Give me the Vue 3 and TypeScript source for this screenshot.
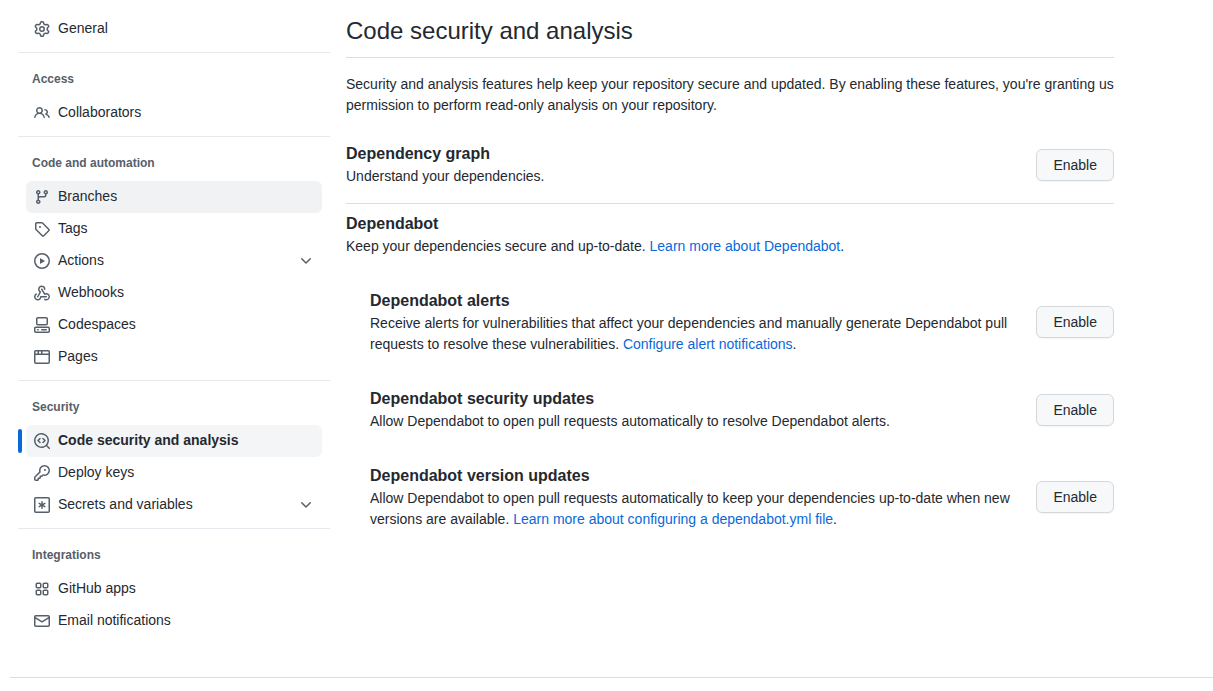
<script setup lang="ts">
interface NavItem {
  label: string
  icon: string
  expandable?: boolean
  hovered?: boolean
  current?: boolean
}
interface NavGroup {
  title?: string
  items: NavItem[]
}
interface Feature {
  title: string
  text: string
  link?: string
}

const icons: Record<string, string> = {
  gear: 'M8 0a8.2 8.2 0 0 1 .701.031C9.444.095 9.99.645 10.16 1.29l.288 1.107c.018.066.079.158.212.224.231.114.454.243.668.386.123.082.233.09.299.071l1.103-.303c.644-.176 1.392.021 1.82.63.27.385.506.792.704 1.218.315.675.111 1.422-.364 1.891l-.814.806c-.049.048-.098.147-.088.294.016.257.016.515 0 .772-.01.147.038.246.088.294l.814.806c.475.469.679 1.216.364 1.891a7.977 7.977 0 0 1-.704 1.217c-.428.61-1.176.807-1.82.63l-1.102-.302c-.067-.019-.177-.011-.3.071a5.909 5.909 0 0 1-.668.386c-.133.066-.194.158-.211.224l-.29 1.106c-.168.646-.715 1.196-1.458 1.26a8.006 8.006 0 0 1-1.402 0c-.743-.064-1.289-.614-1.458-1.26l-.289-1.106c-.018-.066-.079-.158-.212-.224a5.738 5.738 0 0 1-.668-.386c-.123-.082-.233-.09-.299-.071l-1.103.303c-.644.176-1.392-.021-1.82-.63a8.12 8.12 0 0 1-.704-1.218c-.315-.675-.111-1.422.363-1.891l.815-.806c.05-.048.098-.147.088-.294a6.214 6.214 0 0 1 0-.772c.01-.147-.038-.246-.088-.294l-.815-.806C.635 6.045.431 5.298.746 4.623a7.92 7.92 0 0 1 .704-1.217c.428-.61 1.176-.807 1.82-.63l1.102.302c.067.019.177.011.3-.071.214-.143.437-.272.668-.386.133-.066.194-.158.211-.224l.29-1.106C6.009.645 6.556.095 7.299.03 7.53.01 7.764 0 8 0Zm-.571 1.525c-.036.003-.108.036-.137.146l-.289 1.105c-.147.561-.549.967-.998 1.189-.173.086-.34.183-.5.29-.417.278-.97.423-1.529.27l-1.103-.303c-.109-.03-.175.016-.195.045-.22.312-.412.644-.573.99-.014.031-.021.11.059.19l.815.806c.411.406.562.957.53 1.456a4.709 4.709 0 0 0 0 .582c.032.499-.119 1.05-.53 1.456l-.815.806c-.081.08-.073.159-.059.19.162.346.353.677.573.989.02.03.085.076.195.046l1.102-.303c.56-.153 1.113-.008 1.53.27.161.107.328.204.501.29.447.222.85.629.997 1.189l.289 1.105c.029.109.101.143.137.146a6.6 6.6 0 0 0 1.142 0c.036-.003.108-.036.137-.146l.289-1.105c.147-.561.549-.967.998-1.189.173-.086.34-.183.5-.29.417-.278.97-.423 1.529-.27l1.103.303c.109.029.175-.016.195-.045.22-.313.411-.644.573-.99.014-.031.021-.11-.059-.19l-.815-.806c-.411-.406-.562-.957-.53-1.456a4.709 4.709 0 0 0 0-.582c-.032-.499.119-1.05.53-1.456l.815-.806c.081-.08.073-.159.059-.19a6.464 6.464 0 0 0-.573-.989c-.02-.03-.085-.076-.195-.046l-1.102.303c-.56.153-1.113.008-1.53-.27a4.44 4.44 0 0 0-.501-.29c-.447-.222-.85-.629-.997-1.189l-.289-1.105c-.029-.11-.101-.143-.137-.146a6.6 6.6 0 0 0-1.142 0ZM11 8a3 3 0 1 1-6 0 3 3 0 0 1 6 0ZM9.5 8a1.5 1.5 0 1 0-3.001.001A1.5 1.5 0 0 0 9.5 8Z',
  people: 'M2 5.5a3.5 3.5 0 1 1 5.898 2.549 5.508 5.508 0 0 1 3.034 4.084.75.75 0 1 1-1.482.235 4 4 0 0 0-7.9 0 .75.75 0 0 1-1.482-.236A5.507 5.507 0 0 1 3.102 8.05 3.493 3.493 0 0 1 2 5.5ZM11 4a3.001 3.001 0 0 1 2.22 5.018 5.01 5.01 0 0 1 2.56 3.012.749.749 0 0 1-.885.954.752.752 0 0 1-.549-.514 3.507 3.507 0 0 0-2.522-2.372.75.75 0 0 1-.574-.73v-.352a.75.75 0 0 1 .416-.672A1.5 1.5 0 0 0 11 5.5.75.75 0 0 1 11 4Zm-5.5-.5a2 2 0 1 0-.001 3.999A2 2 0 0 0 5.5 3.5Z',
  branch: 'M9.5 3.25a2.25 2.25 0 1 1 3 2.122V6A2.5 2.5 0 0 1 10 8.5H6a1 1 0 0 0-1 1v1.128a2.251 2.251 0 1 1-1.5 0V5.372a2.25 2.25 0 1 1 1.5 0v1.836A2.493 2.493 0 0 1 6 7h4a1 1 0 0 0 1-1v-.628A2.25 2.25 0 0 1 9.5 3.25Zm-6 0a.75.75 0 1 0 1.5 0 .75.75 0 0 0-1.5 0Zm8.25-.75a.75.75 0 1 0 0 1.5.75.75 0 0 0 0-1.5ZM4.25 12a.75.75 0 1 0 0 1.5.75.75 0 0 0 0-1.5Z',
  tag: 'M1 7.775V2.75C1 1.784 1.784 1 2.75 1h5.025c.464 0 .91.184 1.238.513l6.25 6.25a1.75 1.75 0 0 1 0 2.474l-5.026 5.026a1.75 1.75 0 0 1-2.474 0l-6.25-6.25A1.752 1.752 0 0 1 1 7.775Zm1.5 0c0 .066.026.13.073.177l6.25 6.25a.25.25 0 0 0 .354 0l5.025-5.025a.25.25 0 0 0 0-.354l-6.25-6.25a.25.25 0 0 0-.177-.073H2.75a.25.25 0 0 0-.25.25ZM6 5a1 1 0 1 1 0 2 1 1 0 0 1 0-2Z',
  play: 'M8 0a8 8 0 1 1 0 16A8 8 0 0 1 8 0ZM1.5 8a6.5 6.5 0 1 0 13 0 6.5 6.5 0 0 0-13 0Zm4.879-2.773 4.264 2.559a.25.25 0 0 1 0 .428l-4.264 2.559A.25.25 0 0 1 6 10.559V5.442a.25.25 0 0 1 .379-.215Z',
  webhook: 'M5.5 4.25a2.25 2.25 0 0 1 4.5 0 .75.75 0 0 0 1.5 0 3.75 3.75 0 1 0-6.14 2.889l-2.272 4.258a.75.75 0 0 0 1.324.706L7 7.25a.75.75 0 0 0-.309-1.015A2.25 2.25 0 0 1 5.5 4.25Z M7.364 3.607a.75.75 0 0 1 1.03.257l2.608 4.349a3.75 3.75 0 1 1-.628 6.785.75.75 0 0 1 .752-1.299 2.25 2.25 0 1 0-.033-3.88.75.75 0 0 1-1.03-.256L7.107 4.636a.75.75 0 0 1 .257-1.03Z M2.9 8.776A.75.75 0 0 1 2.625 9.8 2.25 2.25 0 1 0 6 11.75a.75.75 0 0 1 .75-.751h5.5a.75.75 0 0 1 0 1.5H7.425a3.751 3.751 0 1 1-5.55-3.998.75.75 0 0 1 1.024.274Z',
  codespaces: 'M0 11.25c0-.966.784-1.75 1.75-1.75h12.5c.966 0 1.75.784 1.75 1.75v3A1.75 1.75 0 0 1 14.25 16H1.75A1.75 1.75 0 0 1 0 14.25Zm2-9.5C2 .784 2.784 0 3.75 0h8.5C13.216 0 14 .784 14 1.75v5a1.75 1.75 0 0 1-1.75 1.75h-8.5A1.75 1.75 0 0 1 2 6.75Zm1.75-.25a.25.25 0 0 0-.25.25v5c0 .138.112.25.25.25h8.5a.25.25 0 0 0 .25-.25v-5a.25.25 0 0 0-.25-.25Zm-2 9.5a.25.25 0 0 0-.25.25v3c0 .138.112.25.25.25h12.5a.25.25 0 0 0 .25-.25v-3a.25.25 0 0 0-.25-.25Z M7 12.75a.75.75 0 0 1 .75-.75h4.5a.75.75 0 0 1 0 1.5h-4.5a.75.75 0 0 1-.75-.75Zm-4 0a.75.75 0 0 1 .75-.75h.5a.75.75 0 0 1 0 1.5h-.5a.75.75 0 0 1-.75-.75Z',
  browser: 'M0 2.75C0 1.784.784 1 1.75 1h12.5c.966 0 1.75.784 1.75 1.75v10.5A1.75 1.75 0 0 1 14.25 15H1.75A1.75 1.75 0 0 1 0 13.25ZM14.5 6h-13v7.25c0 .138.112.25.25.25h12.5a.25.25 0 0 0 .25-.25Zm-6-3.5v2h6V2.75a.25.25 0 0 0-.25-.25ZM5 2.5v2h2v-2Zm-3.25 0a.25.25 0 0 0-.25.25V4.5h2v-2Z',
  codescan: 'M8.47 4.97a.75.75 0 0 0 0 1.06L9.94 7.5 8.47 8.97a.75.75 0 1 0 1.06 1.06l2-2a.75.75 0 0 0 0-1.06l-2-2a.75.75 0 0 0-1.06 0ZM6.53 6.03a.75.75 0 0 0-1.06-1.06l-2 2a.75.75 0 0 0 0 1.06l2 2a.75.75 0 1 0 1.06-1.06L5.06 7.5l1.47-1.47Z M12.246 13.307a7.501 7.501 0 1 1 1.06-1.06l2.474 2.473a.749.749 0 1 1-1.06 1.06ZM1.5 7.5a6.002 6.002 0 0 0 3.608 5.504 6.002 6.002 0 0 0 6.486-1.117.748.748 0 0 1 .292-.293A6 6 0 1 0 1.5 7.5Z',
  key: 'M10.5 0a5.499 5.499 0 1 1-1.288 10.848l-.932.932a.749.749 0 0 1-.53.22H7v.75a.749.749 0 0 1-.22.53l-.5.5a.749.749 0 0 1-.53.22H5v.75a.749.749 0 0 1-.22.53l-.5.5a.749.749 0 0 1-.53.22h-2A1.75 1.75 0 0 1 0 14.25v-2c0-.199.079-.389.22-.53l4.932-4.932A5.5 5.5 0 0 1 10.5 0Zm-4 5.5c-.001.431.069.86.205 1.269a.75.75 0 0 1-.181.768L1.5 12.56v1.69c0 .138.112.25.25.25h1.69l.06-.06v-1.19a.75.75 0 0 1 .75-.75h1.19l.06-.06v-1.19a.75.75 0 0 1 .75-.75h1.19l1.023-1.025a.75.75 0 0 1 .768-.18A4 4 0 1 0 6.5 5.5ZM11 6a1 1 0 1 1 0-2 1 1 0 0 1 0 2Z',
  secret: 'M1.75 0h12.5C15.216 0 16 .784 16 1.75v12.5A1.75 1.75 0 0 1 14.25 16H1.75A1.75 1.75 0 0 1 0 14.25V1.75C0 .784.784 0 1.75 0Zm0 1.5a.25.25 0 0 0-.25.25v12.5c0 .138.112.25.25.25h12.5a.25.25 0 0 0 .25-.25V1.75a.25.25 0 0 0-.25-.25Z M8 4a.75.75 0 0 1 .75.75V6.7l1.69-.975a.75.75 0 0 1 .75 1.3L9.5 8l1.69.975a.75.75 0 0 1-.75 1.3L8.75 9.3v1.95a.75.75 0 0 1-1.5 0V9.3l-1.69.975a.75.75 0 0 1-.75-1.3L6.5 8l-1.69-.975a.75.75 0 0 1 .75-1.3L7.25 6.7V4.75A.75.75 0 0 1 8 4Z',
  apps: 'M3.25 1.5h2.5c.966 0 1.75.784 1.75 1.75v2.5A1.75 1.75 0 0 1 5.75 7.5h-2.5A1.75 1.75 0 0 1 1.5 5.75v-2.5c0-.966.784-1.75 1.75-1.75Zm0 1.5a.25.25 0 0 0-.25.25v2.5c0 .138.112.25.25.25h2.5A.25.25 0 0 0 6 5.75v-2.5A.25.25 0 0 0 5.75 3Zm7-1.5h2.5c.966 0 1.75.784 1.75 1.75v2.5a1.75 1.75 0 0 1-1.75 1.75h-2.5A1.75 1.75 0 0 1 8.5 5.75v-2.5c0-.966.784-1.75 1.75-1.75Zm0 1.5a.25.25 0 0 0-.25.25v2.5c0 .138.112.25.25.25h2.5a.25.25 0 0 0 .25-.25v-2.5a.25.25 0 0 0-.25-.25Zm-7 5.5h2.5c.966 0 1.75.784 1.75 1.75v2.5a1.75 1.75 0 0 1-1.75 1.75h-2.5a1.75 1.75 0 0 1-1.75-1.75v-2.5c0-.966.784-1.75 1.75-1.75Zm0 1.5a.25.25 0 0 0-.25.25v2.5c0 .138.112.25.25.25h2.5a.25.25 0 0 0 .25-.25v-2.5a.25.25 0 0 0-.25-.25Zm7-1.5h2.5c.966 0 1.75.784 1.75 1.75v2.5a1.75 1.75 0 0 1-1.75 1.75h-2.5a1.75 1.75 0 0 1-1.75-1.75v-2.5c0-.966.784-1.75 1.75-1.75Zm0 1.5a.25.25 0 0 0-.25.25v2.5c0 .138.112.25.25.25h2.5a.25.25 0 0 0 .25-.25v-2.5a.25.25 0 0 0-.25-.25Z',
  mail: 'M1.75 2h12.5c.966 0 1.75.784 1.75 1.75v8.5A1.75 1.75 0 0 1 14.25 14H1.75A1.75 1.75 0 0 1 0 12.25v-8.5C0 2.784.784 2 1.75 2ZM1.5 12.251c0 .138.112.25.25.25h12.5a.25.25 0 0 0 .25-.25V5.809L8.38 9.397a.75.75 0 0 1-.76 0L1.5 5.809v6.442Zm13-8.181v-.32a.25.25 0 0 0-.25-.25H1.75a.25.25 0 0 0-.25.25v.32L8 7.88Z',
  chevron: 'M12.78 5.22a.749.749 0 0 1 0 1.06l-4.25 4.25a.749.749 0 0 1-1.06 0L3.22 6.28a.749.749 0 1 1 1.06-1.06L8 8.939l3.72-3.719a.749.749 0 0 1 1.06 0Z',
}

const groups: NavGroup[] = [
  { items: [{ label: 'General', icon: 'gear' }] },
  { title: 'Access', items: [{ label: 'Collaborators', icon: 'people' }] },
  {
    title: 'Code and automation',
    items: [
      { label: 'Branches', icon: 'branch', hovered: true },
      { label: 'Tags', icon: 'tag' },
      { label: 'Actions', icon: 'play', expandable: true },
      { label: 'Webhooks', icon: 'webhook' },
      { label: 'Codespaces', icon: 'codespaces' },
      { label: 'Pages', icon: 'browser' },
    ],
  },
  {
    title: 'Security',
    items: [
      { label: 'Code security and analysis', icon: 'codescan', current: true },
      { label: 'Deploy keys', icon: 'key' },
      { label: 'Secrets and variables', icon: 'secret', expandable: true },
    ],
  },
  {
    title: 'Integrations',
    items: [
      { label: 'GitHub apps', icon: 'apps' },
      { label: 'Email notifications', icon: 'mail' },
    ],
  },
]

const features: Feature[] = [
  {
    title: 'Dependabot alerts',
    text: 'Receive alerts for vulnerabilities that affect your dependencies and manually generate Dependabot pull requests to resolve these vulnerabilities.',
    link: 'Configure alert notifications',
  },
  {
    title: 'Dependabot security updates',
    text: 'Allow Dependabot to open pull requests automatically to resolve Dependabot alerts.',
  },
  {
    title: 'Dependabot version updates',
    text: 'Allow Dependabot to open pull requests automatically to keep your dependencies up-to-date when new versions are available.',
    link: 'Learn more about configuring a dependabot.yml file',
  },
]
</script>

<template>
  <div class="page">
    <div class="layout">
      <nav class="sidebar" aria-label="Repository settings">
        <section v-for="(group, g) in groups" :key="g" class="group">
          <h2 v-if="group.title" class="group-title">{{ group.title }}</h2>
          <ul class="list">
            <li v-for="item in group.items" :key="item.label" class="entry" :class="{ current: item.current }">
              <component
                :is="item.expandable ? 'button' : 'a'"
                class="nav-item"
                :class="{ hovered: item.hovered }"
                :href="item.expandable ? undefined : '#'"
                :type="item.expandable ? 'button' : undefined"
                :aria-expanded="item.expandable ? 'false' : undefined"
                :aria-current="item.current ? 'page' : undefined"
              >
                <svg class="icon" viewBox="0 0 16 16" aria-hidden="true"><path :d="icons[item.icon]" /></svg>
                <span class="nav-label">{{ item.label }}</span>
                <svg v-if="item.expandable" class="icon" viewBox="0 0 16 16" aria-hidden="true">
                  <path :d="icons.chevron" />
                </svg>
              </component>
            </li>
          </ul>
        </section>
      </nav>

      <main class="content">
        <h1 class="title">Code security and analysis</h1>
        <p class="intro">
          Security and analysis features help keep your repository secure and updated. By enabling these features,
          you're granting us permission to perform read-only analysis on your repository.
        </p>

        <section class="feature graph">
          <div class="feature-text">
            <h3 id="graph-title">Dependency graph</h3>
            <p>Understand your dependencies.</p>
          </div>
          <button class="btn" type="button" aria-describedby="graph-title">Enable</button>
        </section>

        <section class="dependabot">
          <h3>Dependabot</h3>
          <p>Keep your dependencies secure and up-to-date. <a href="#">Learn more about Dependabot</a>.</p>
          <ul class="features">
            <li v-for="(feature, i) in features" :key="feature.title" class="feature">
              <div class="feature-text">
                <h3 :id="`feature-${i}`">{{ feature.title }}</h3>
                <p>
                  {{ feature.text }}
                  <template v-if="feature.link"><a href="#">{{ feature.link }}</a>.</template>
                </p>
              </div>
              <button class="btn" type="button" :aria-describedby="`feature-${i}`">Enable</button>
            </li>
          </ul>
        </section>
      </main>
    </div>
    <footer class="footer"></footer>
  </div>
</template>

<style>
body {
  margin: 0;
  background: #ffffff;
}
</style>

<style scoped>
.page {
  box-sizing: border-box;
  padding: 13px 0 0 10px;
  color: #24292f;
  font-family: "Liberation Sans", Arial, sans-serif;
  font-size: 14px;
  line-height: 21px;
}
h1,
h2,
h3,
p,
ul {
  margin: 0;
  padding: 0;
}
ul {
  list-style: none;
}
.layout {
  display: grid;
  grid-template-columns: 312px minmax(0, 1fr);
  gap: 16px;
  max-width: 1096px;
  margin-left: 8px;
}
.group + .group {
  margin-top: 7px;
  border-top: 1px solid #e6eaee;
}
.group-title {
  padding: 17px 14px 9px;
  color: #57606a;
  font-size: 12px;
  font-weight: 700;
  line-height: 18px;
}
.entry {
  position: relative;
  padding: 0 8px;
}
.nav-item {
  display: flex;
  align-items: center;
  gap: 8px;
  box-sizing: border-box;
  width: 100%;
  min-height: 32px;
  padding: 5px 8px;
  border: 0;
  border-radius: 6px;
  background: transparent;
  font: inherit;
  text-align: left;
  text-decoration: none;
  cursor: pointer;
}
.nav-item:hover,
.hovered {
  background: #f0f2f4;
}
.nav-label {
  flex: 1;
  padding-bottom: 1px;
}
.current .nav-item {
  background: #f3f5f7;
  font-weight: 700;
}
.current::before {
  content: "";
  position: absolute;
  top: 4px;
  left: 0;
  width: 4px;
  height: 24px;
  border-radius: 2px;
  background: #0969da;
}
.icon {
  flex: none;
  width: 16px;
  height: 16px;
  fill: #57606a;
  fill-rule: evenodd;
}
.title {
  padding-bottom: 8px;
  border-bottom: 1px solid #d8dee4;
  font-size: 24px;
  font-weight: 400;
  line-height: 36px;
}
.intro {
  margin-top: 16px;
}
h3 {
  font-size: 16px;
  font-weight: 700;
  line-height: 24px;
}
.feature {
  display: flex;
  align-items: center;
  gap: 24px;
}
.feature-text {
  flex: 1;
  min-width: 0;
}
.graph {
  margin-top: 26px;
  padding-bottom: 16px;
  border-bottom: 1px solid #d8dee4;
}
.dependabot {
  padding-top: 8px;
}
.features {
  display: grid;
  gap: 32px;
  margin-top: 32px;
  padding-left: 24px;
}
a {
  color: #0969da;
  text-decoration: none;
}
.nav-item {
  color: #24292f;
}
.btn {
  flex: none;
  padding: 5px 16px;
  border: 1px solid #d5d8da;
  border-radius: 6px;
  background: #f6f8fa;
  box-shadow: 0 1px 0 rgba(31, 35, 40, 0.04);
  color: #24292f;
  font: inherit;
  line-height: 20px;
  cursor: pointer;
}
.footer {
  margin-top: 40px;
  border-top: 1px solid #d8dee4;
}
</style>
